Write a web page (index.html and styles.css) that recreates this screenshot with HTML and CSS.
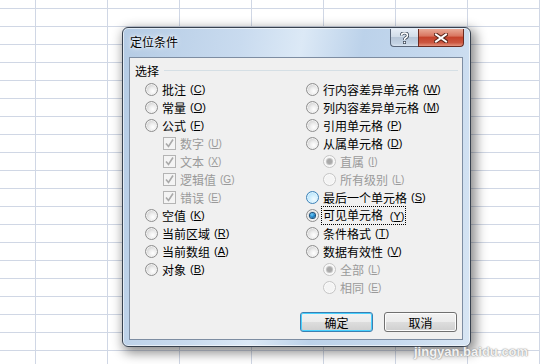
FILE: index.html
```html
<!DOCTYPE html>
<html lang="zh-CN">
<head>
    <meta charset="UTF-8">
    <meta name="viewport" content="width=device-width, initial-scale=1.0">
    <title>定位条件</title>
    <link rel="stylesheet" href="styles.css">
</head>
<body>

    <div class="sheet">

        <div class="dialog">
            <div class="titlebar">
                <span class="title">定位条件</span>
                <div class="caption-buttons">
                    <div class="cap-btn help-btn">
                        <svg width="9" height="12" viewBox="0 0 9 12">
                            <path d="M1.5 3.5 Q1.5 1 4.5 1 Q7.5 1 7.5 3.5 Q7.5 5 5.5 6 Q4.5 6.6 4.5 8" fill="none" stroke="#3a4656" stroke-width="3.2"/>
                            <path d="M1.5 3.5 Q1.5 1 4.5 1 Q7.5 1 7.5 3.5 Q7.5 5 5.5 6 Q4.5 6.6 4.5 8" fill="none" stroke="#fff" stroke-width="1.6"/>
                            <rect x="3" y="9" width="3" height="3" fill="#3a4656"/>
                            <rect x="3.7" y="9.7" width="1.6" height="1.6" fill="#fff"/>
                        </svg>
                    </div>
                    <div class="cap-btn close-btn">
                        <svg width="14" height="10" viewBox="0 0 14 10">
                            <path d="M2 1.5 L12 8.5 M12 1.5 L2 8.5" stroke="#5a2418" stroke-width="4" stroke-linecap="square"/>
                            <path d="M2 1.5 L12 8.5 M12 1.5 L2 8.5" stroke="#fff" stroke-width="2" stroke-linecap="square"/>
                        </svg>
                    </div>
                </div>
            </div>

            <div class="panel">
                <div class="group-head">
                    <span class="group-label">选择</span>
                    <span class="group-line"></span>
                </div>

                <div class="options">
                    <div class="col">
                        <div class="opt"><span class="radio"></span>批注 <span class="key">(<u>C</u>)</span></div>
                        <div class="opt"><span class="radio"></span>常量 <span class="key">(<u>O</u>)</span></div>
                        <div class="opt"><span class="radio"></span>公式 <span class="key">(<u>F</u>)</span></div>
                        <div class="opt sub off"><span class="check"><svg width="11" height="11" viewBox="0 0 11 11"><path d="M2 5.5 L4.5 8.5 L9 1.5" fill="none" stroke="#a9a9a9" stroke-width="1.6"/></svg></span>数字 <span class="key">(<u>U</u>)</span></div>
                        <div class="opt sub off"><span class="check"><svg width="11" height="11" viewBox="0 0 11 11"><path d="M2 5.5 L4.5 8.5 L9 1.5" fill="none" stroke="#a9a9a9" stroke-width="1.6"/></svg></span>文本 <span class="key">(<u>X</u>)</span></div>
                        <div class="opt sub off"><span class="check"><svg width="11" height="11" viewBox="0 0 11 11"><path d="M2 5.5 L4.5 8.5 L9 1.5" fill="none" stroke="#a9a9a9" stroke-width="1.6"/></svg></span>逻辑值 <span class="key">(<u>G</u>)</span></div>
                        <div class="opt sub off"><span class="check"><svg width="11" height="11" viewBox="0 0 11 11"><path d="M2 5.5 L4.5 8.5 L9 1.5" fill="none" stroke="#a9a9a9" stroke-width="1.6"/></svg></span>错误 <span class="key">(<u>E</u>)</span></div>
                        <div class="opt"><span class="radio"></span>空值 <span class="key">(<u>K</u>)</span></div>
                        <div class="opt"><span class="radio"></span>当前区域 <span class="key">(<u>R</u>)</span></div>
                        <div class="opt"><span class="radio"></span>当前数组 <span class="key">(<u>A</u>)</span></div>
                        <div class="opt"><span class="radio"></span>对象 <span class="key">(<u>B</u>)</span></div>
                    </div>
                    <div class="col">
                        <div class="opt"><span class="radio"></span>行内容差异单元格 <span class="key">(<u>W</u>)</span></div>
                        <div class="opt"><span class="radio"></span>列内容差异单元格 <span class="key">(<u>M</u>)</span></div>
                        <div class="opt"><span class="radio"></span>引用单元格 <span class="key">(<u>P</u>)</span></div>
                        <div class="opt"><span class="radio"></span>从属单元格 <span class="key">(<u>D</u>)</span></div>
                        <div class="opt sub-r off"><span class="radio dim-on"></span>直属 <span class="key">(<u>I</u>)</span></div>
                        <div class="opt sub-r off"><span class="radio dim"></span>所有级别 <span class="key">(<u>L</u>)</span></div>
                        <div class="opt"><span class="radio hover"></span>最后一个单元格 <span class="key">(<u>S</u>)</span></div>
                        <div class="opt"><span class="radio on"></span><span class="focus">可见单元格 <span class="key">(<u>Y</u>)</span></span></div>
                        <div class="opt"><span class="radio"></span>条件格式 <span class="key">(<u>T</u>)</span></div>
                        <div class="opt"><span class="radio"></span>数据有效性 <span class="key">(<u>V</u>)</span></div>
                        <div class="opt sub-r off"><span class="radio dim-on"></span>全部 <span class="key">(<u>L</u>)</span></div>
                        <div class="opt sub-r off"><span class="radio dim"></span>相同 <span class="key">(<u>E</u>)</span></div>
                    </div>
                </div>

                <div class="actions">
                    <button class="btn default">确定</button>
                    <button class="btn">取消</button>
                </div>
            </div>
        </div>

        <div class="watermark">jingyan.baidu.com</div>
    </div>

</body>
</html>
```

FILE: styles.css
```css
* {
    margin: 0;
    padding: 0;
    box-sizing: border-box;
}

body {
    margin: 0;
    font-family: "Noto Sans CJK SC", "Liberation Sans", sans-serif;
    font-size: 12px;
    color: #000;
    background: #fff;
}

/* Hoja de cálculo de fondo */
.sheet {
    position: relative;
    width: 540px;
    height: 364px;
    overflow: hidden;
    background-color: #fff;
    background-image:
        linear-gradient(to right, #d0d7e5 1px, transparent 1px),
        linear-gradient(#d0d7e5 1px, transparent 1px);
    background-size: 72px 18px;
    background-position: 35px 8px;
}

/* Ventana de diálogo */
.dialog {
    position: absolute;
    left: 122px;
    top: 27px;
    width: 349px;
    height: 320px;
    border: 1px solid #38424f;
    border-radius: 6px;
    background: linear-gradient(100deg, #b4cbe4 0%, #c9dbef 30%, #dce9f6 45%, #bcd2ea 60%, #c6d9ee 80%, #d8e6f4 100%);
    box-shadow: inset 0 0 0 1px rgba(255, 255, 255, 0.6), 3px 4px 12px 2px rgba(0, 0, 0, 0.45);
    display: flex;
    flex-direction: column;
}

.titlebar {
    height: 29px;
    display: flex;
    align-items: flex-start;
    justify-content: space-between;
    padding: 0 6px 0 7px;
}

.title {
    margin-top: 6px;
    line-height: 16px;
    text-shadow: 0 0 6px #fff, 0 0 3px #fff;
}

.caption-buttons {
    display: flex;
    margin-top: 1px;
}

.cap-btn {
    height: 18px;
    display: flex;
    align-items: center;
    justify-content: center;
    border: 1px solid #59667a;
    border-top: none;
}

.help-btn {
    width: 28px;
    border-radius: 0 0 0 4px;
    border-right: none;
    background: linear-gradient(#e6edf6 0%, #d2dde9 45%, #b7c6d8 50%, #c4d3e4 85%, #dae5f1 100%);
}

.close-btn {
    width: 46px;
    border-color: #6b2a20;
    border-radius: 0 0 4px 0;
    background: linear-gradient(#e9a996 0%, #d97762 40%, #c5432c 50%, #cb5640 80%, #e5937d 100%);
}

.panel {
    flex: 1;
    margin: 0 7px 6px 6px;
    border: 1px solid #7d8da2;
    background: #f0f0f0;
    display: flex;
    flex-direction: column;
}

.group-head {
    display: flex;
    align-items: center;
    height: 16px;
    margin-top: 4px;
    padding: 0 4px 0 5px;
}

.group-line {
    flex: 1;
    height: 1px;
    margin-left: 5px;
    background: #d5dfe5;
}

.options {
    display: grid;
    grid-template-columns: 161px 1fr;
    margin-top: 2px;
    padding-left: 15px;
}

.opt {
    height: 18px;
    display: flex;
    align-items: center;
    white-space: nowrap;
}

.opt.sub {
    padding-left: 18px;
}

.opt.sub-r {
    padding-left: 17px;
}

.opt.off {
    color: #9a9a9a;
}

.key {
    font-family: "Liberation Sans", sans-serif;
    font-size: 11px;
    margin-left: 4px;
}

.off .key {
    font-size: 10px;
}

/* Botones de opción */
.radio {
    width: 13px;
    height: 13px;
    margin-right: 4px;
    border-radius: 50%;
    border: 1px solid #8f8f8f;
    background: radial-gradient(circle at 62% 65%, #ffffff 0%, #eeeeee 35%, #cfcfcf 75%, #b9b9b9 100%);
    box-shadow: inset 0 0 0 1px #f2f2f2;
    display: flex;
    align-items: center;
    justify-content: center;
    flex-shrink: 0;
}

.radio.hover {
    border-color: #3d82b8;
    background: radial-gradient(circle at 62% 65%, #f2fbff 0%, #cdeefe 45%, #9fd7f7 100%);
    box-shadow: inset 0 0 0 1px #def4fe;
}

.radio.on::after {
    content: "";
    width: 5px;
    height: 5px;
    border-radius: 50%;
    background: radial-gradient(circle at 40% 35%, #6fd0ff 0%, #1b80c4 55%, #0c3d68 100%);
    box-shadow: 0 0 0 1px #18507c;
}

.radio.dim,
.radio.dim-on {
    border-color: #c5c5c5;
    background: #f4f4f4;
    box-shadow: inset 0 0 0 1px #fafafa;
}

.radio.dim-on::after {
    content: "";
    width: 5px;
    height: 5px;
    border-radius: 50%;
    background: #a9a9a9;
    box-shadow: 0 0 0 1px #c2c2c2;
}

.check {
    width: 13px;
    height: 13px;
    margin-right: 4px;
    border: 1px solid #b4b4b4;
    background: #f4f4f4;
    display: flex;
    align-items: center;
    justify-content: center;
    flex-shrink: 0;
}

.focus {
    border: 1px dotted #000;
    padding: 0 1px;
    margin-left: -2px;
    line-height: 15px;
}

/* Botones */
.actions {
    display: flex;
    justify-content: flex-end;
    gap: 11px;
    margin-top: 16px;
    padding-right: 5px;
}

.btn {
    width: 73px;
    height: 20px;
    font-family: inherit;
    font-size: 12px;
    color: #000;
    border: 1px solid #707070;
    border-radius: 3px;
    background: linear-gradient(#f2f2f2 0%, #ebebeb 50%, #dddddd 51%, #cfcfcf 100%);
    box-shadow: inset 0 0 0 1px #fcfcfc;
}

.btn.default {
    border-color: #3c7fb1;
    box-shadow: inset 0 0 0 1px #48d1ff;
}

/* Marca de agua */
.watermark {
    position: absolute;
    left: 414px;
    top: 344px;
    font-family: "Liberation Sans", sans-serif;
    font-size: 13px;
    font-weight: bold;
    color: rgba(255, 255, 255, 0.9);
    text-shadow: 0 0 2px #9a9a9a, 0 0 1px #888;
    white-space: nowrap;
}
```
